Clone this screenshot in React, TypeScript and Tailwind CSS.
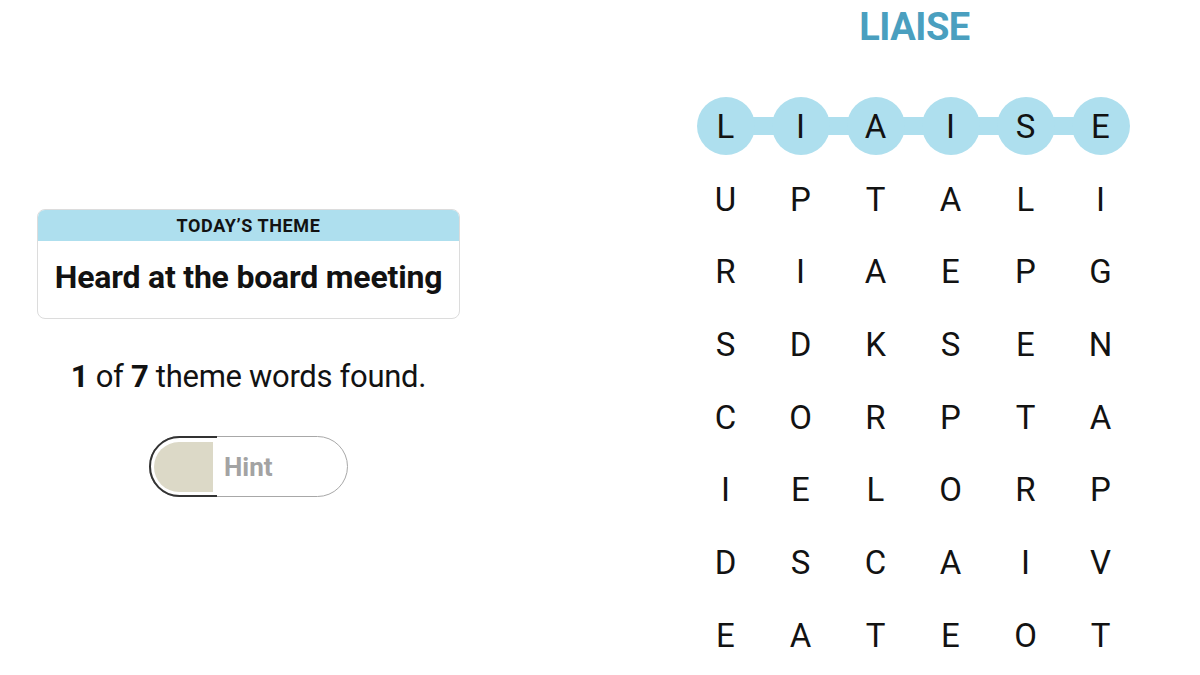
import React from "react";

const rows = [
  ["L", "I", "A", "I", "S", "E"],
  ["U", "P", "T", "A", "L", "I"],
  ["R", "I", "A", "E", "P", "G"],
  ["S", "D", "K", "S", "E", "N"],
  ["C", "O", "R", "P", "T", "A"],
  ["I", "E", "L", "O", "R", "P"],
  ["D", "S", "C", "A", "I", "V"],
  ["E", "A", "T", "E", "O", "T"],
];

export default function App() {
  return (
    <div className="w-[1200px] h-[675px] bg-white overflow-hidden flex" style={{ fontFamily: "Roboto, 'Liberation Sans', sans-serif" }}>
      {/* Left panel */}
      <div className="w-[688px] shrink-0 pl-[37px] pt-[209px]">
        <div className="w-[423px] flex flex-col items-center">
          <div className="w-full rounded-[8px] border border-[#dcdcdc] overflow-hidden">
            <div className="h-[31px] bg-[#aedfee] flex items-center justify-center text-[18px] font-bold tracking-[0.6px] text-[#121212] leading-none pt-[1px]">
              TODAY’S THEME
            </div>
            <div className="h-[77px] flex items-center justify-center text-[32px] font-bold text-[#121212] tracking-[-0.2px] leading-none pb-[5px]">
              Heard at the board meeting
            </div>
          </div>
          <div className="mt-[42px] text-[31px] text-[#121212] leading-none tracking-[-0.3px]">
            <span className="font-bold">1</span> of <span className="font-bold">7</span> theme words found.
          </div>
          <div className="mt-[44px] relative w-[199px] h-[61px] rounded-full border-[1.5px] border-[#a8a8a8] p-[4px] flex items-center">
            <div className="absolute left-[-1.5px] top-[-1.5px] h-[61px] w-[68px] overflow-hidden">
              <div className="w-[199px] h-[61px] rounded-full border-[2px] border-[#333]" />
            </div>
            <div className="h-[50px] w-[59px] rounded-l-full bg-[#dcd9c7]" />
            <span className="ml-[11px] text-[26px] font-bold text-[#a3a3a3] leading-none">Hint</span>
          </div>
        </div>
      </div>
      {/* Right panel */}
      <div className="w-[450px] shrink-0 flex flex-col items-center">
        <div className="h-[90px] pt-[8px] text-[38px] font-bold text-[#4a9fbf] leading-[38px] tracking-[-0.5px] ml-[3px]">
          LIAISE
        </div>
        <div className="flex flex-col">
          {rows.map((row, ri) => (
            <div key={ri} className="relative h-[72.7px] w-[450px] grid grid-cols-6 items-center">
              {ri === 0 && (
                <div className="absolute left-[37px] right-[37px] top-[27px] h-[18px] bg-[#aedfee]" />
              )}
              {row.map((ch, ci) => (
                <div key={ci} className="relative flex items-center justify-center h-full">
                  {ri === 0 && <div className="absolute w-[58px] h-[58px] rounded-full bg-[#aedfee]" />}
                  <span className="relative text-[33px] text-[#121212] leading-none">{ch}</span>
                </div>
              ))}
            </div>
          ))}
        </div>
      </div>
    </div>
  );
}
